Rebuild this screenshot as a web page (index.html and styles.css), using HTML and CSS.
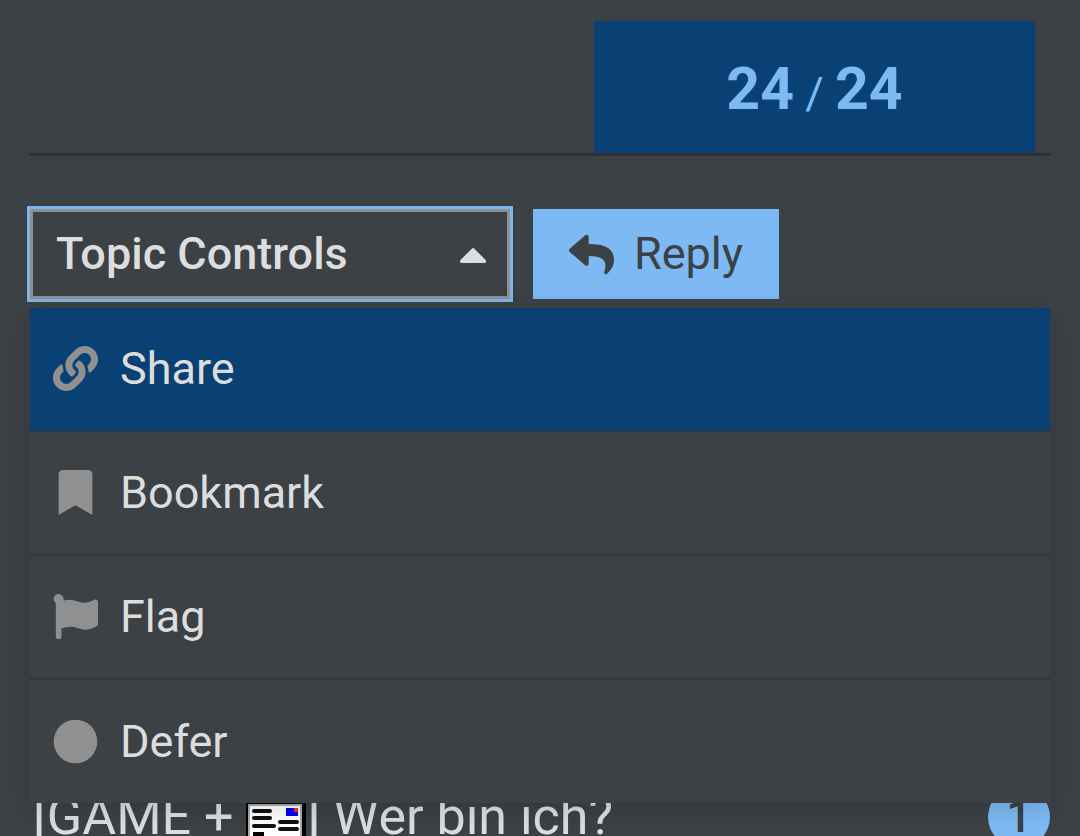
FILE: index.html
```html
<!DOCTYPE html>
<html lang="en">
<head>
    <meta charset="UTF-8">
    <meta name="viewport" content="width=device-width, initial-scale=1.0">
    <title>Topic Controls</title>
    <link rel="stylesheet" href="styles.css">
</head>
<body>
    <main class="topic">
        <div class="progress-row">
            <div class="progress"><strong>24</strong> <span>/</span> <strong>24</strong></div>
        </div>

        <div class="footer-buttons">
            <button type="button" class="btn btn-controls" aria-haspopup="true" aria-expanded="true">
                Topic Controls
                <svg class="caret" viewBox="0 0 320 512" aria-hidden="true"><path d="M288.662 352H31.338c-17.818 0-26.741-21.543-14.142-34.142l128.662-128.662c7.81-7.81 20.474-7.81 28.284 0l128.662 128.662c12.6 12.599 3.676 34.142-14.142 34.142z"/></svg>
            </button>
            <button type="button" class="btn btn-reply">
                <svg class="icon" viewBox="0 0 512 512" aria-hidden="true"><path d="M8.309 189.836L184.313 37.851C199.719 24.546 224 35.347 224 56.015v80.053c160.629 1.839 288 34.032 288 186.258 0 61.441-39.581 122.309-83.333 154.132-13.653 9.931-33.111-2.533-28.077-18.631 45.344-145.012-21.507-183.51-176.59-185.742V360c0 20.7-24.3 31.453-39.687 18.164l-176.004-152c-11.071-9.562-11.086-26.753 0-36.328z"/></svg>
                Reply
            </button>

            <ul class="menu">
                <li class="menu-item selected">
                    <button type="button">
                        <svg class="icon" viewBox="0 0 512 512" aria-hidden="true"><path d="M326.612 185.391c59.747 59.809 58.927 155.698.36 214.59-.11.12-.24.25-.36.37l-67.2 67.2c-59.27 59.27-155.699 59.262-214.96 0-59.27-59.26-59.27-155.7 0-214.96l37.106-37.106c9.84-9.84 26.786-3.3 27.294 10.606.648 17.722 3.826 35.527 9.69 52.721 1.986 5.822.567 12.262-3.783 16.612l-13.087 13.087c-28.026 28.026-28.905 73.66-1.155 101.96 28.024 28.579 74.086 28.749 102.325.51l67.2-67.19c28.191-28.191 28.073-73.757 0-101.83-3.701-3.694-7.429-6.564-10.341-8.569a16.037 16.037 0 0 1-6.947-12.606c-.396-10.567 3.348-21.456 11.698-29.806l21.054-21.055c5.521-5.521 14.182-6.199 20.584-1.731a152.482 152.482 0 0 1 20.522 17.197zM467.547 44.449c-59.261-59.262-155.69-59.27-214.96 0l-67.2 67.2c-.12.12-.25.25-.36.37-58.566 58.892-59.387 154.781.36 214.59a152.454 152.454 0 0 0 20.521 17.196c6.402 4.468 15.064 3.789 20.584-1.731l21.054-21.055c8.35-8.35 12.094-19.239 11.698-29.806a16.037 16.037 0 0 0-6.947-12.606c-2.912-2.005-6.64-4.875-10.341-8.569-28.073-28.073-28.191-73.639 0-101.83l67.2-67.19c28.239-28.239 74.3-28.069 102.325.51 27.75 28.3 26.872 73.934-1.155 101.96l-13.087 13.087c-4.35 4.35-5.769 10.79-3.783 16.612 5.864 17.194 9.042 34.999 9.69 52.721.509 13.906 17.454 20.446 27.294 10.606l37.106-37.106c59.271-59.259 59.271-155.699.001-214.959z"/></svg>
                        Share
                    </button>
                </li>
                <li class="menu-item">
                    <button type="button">
                        <svg class="icon" viewBox="-64 0 512 512" aria-hidden="true"><path d="M0 512V48C0 21.49 21.49 0 48 0h288c26.51 0 48 21.49 48 48v464L192 400 0 512z"/></svg>
                        Bookmark
                    </button>
                </li>
                <li class="menu-item">
                    <button type="button">
                        <svg class="icon" viewBox="0 0 512 512" aria-hidden="true"><path d="M349.565 98.783C295.978 98.783 251.721 64 184.348 64c-24.955 0-47.309 4.384-68.045 12.013a55.947 55.947 0 0 0 3.586-23.562C118.117 24.015 94.806 1.206 66.338.048 34.345-1.254 8 24.296 8 56c0 19.026 9.497 35.825 24 45.945V488c0 13.255 10.745 24 24 24h16c13.255 0 24-10.745 24-24v-94.4c28.311-12.064 63.582-22.122 114.435-22.122 53.588 0 97.844 34.783 165.217 34.783 48.169 0 86.667-16.294 122.505-40.858C506.84 359.452 512 349.571 512 339.045v-243.1c0-23.393-24.269-38.87-45.485-29.016-34.338 15.948-76.454 31.854-116.95 31.854z"/></svg>
                        Flag
                    </button>
                </li>
                <li class="menu-item">
                    <button type="button">
                        <svg class="icon" viewBox="0 0 512 512" aria-hidden="true"><circle cx="256" cy="256" r="248"/></svg>
                        Defer
                    </button>
                </li>
            </ul>
        </div>

        <div class="suggested">
            <a class="title" href="#">[GAME + <svg class="emoji" viewBox="0 0 60 60" aria-hidden="true">
                <rect width="60" height="60" fill="#000"/>
                <rect x="2" y="16" width="54" height="40" fill="#aaa"/>
                <rect x="4" y="18" width="50" height="38" fill="#fff"/>
                <path d="M8 23h16M8 30h16M8 38h20M34 34h17M34 41h17" stroke="#111" stroke-width="4" stroke-linecap="round"/>
                <rect x="40" y="20" width="12" height="8" fill="#00f"/>
                <rect x="48" y="20" width="4" height="4" fill="#e33"/>
                <path d="M7 44h11v12H7z" fill="#000"/>
            </svg>] Wer bin ich?</a>
            <a class="badge" href="#">1</a>
        </div>
    </main>
</body>
</html>
```
FILE: styles.css
```css
* {
    box-sizing: border-box;
}

body {
    margin: 0;
    height: 100vh;
    overflow: hidden;
    background: #3c4146;
    color: #dddddd;
    font-family: Roboto, sans-serif;
    font-size: 45px;
    line-height: 54px;
}

button {
    font: inherit;
    color: inherit;
    border: none;
    background: none;
    cursor: pointer;
}

a {
    color: inherit;
    text-decoration: none;
}

.topic {
    padding: 21px 30px 0;
}

/* Post counter */
.progress-row {
    display: flex;
    justify-content: flex-end;
    padding-right: 15px;
    border-bottom: 3px solid #2e3032;
}

.progress {
    width: 441px;
    height: 132px;
    line-height: 136px;
    text-align: center;
    background: #0a4175;
    color: #7db9f3;
}

.progress strong {
    font-size: 59px;
    font-weight: 700;
}

/* Buttons */
.footer-buttons {
    position: relative;
    display: flex;
    gap: 23px;
    margin-top: 53px;
}

.btn {
    display: flex;
    align-items: center;
    height: 90px;
}

.btn-controls {
    width: 480px;
    justify-content: space-between;
    padding: 0 20px 0 23px;
    border: 3px solid #909090;
    outline: 3px solid #7db4ec;
    font-weight: 500;
}

.btn-reply {
    gap: 20px;
    padding: 0 36px;
    background: #7db9f3;
    color: #3c4146;
}

.icon {
    width: 45px;
    height: 45px;
    flex: none;
    fill: currentColor;
}

.caret {
    height: 45px;
    fill: currentColor;
}

/* Dropdown menu */
.menu {
    position: absolute;
    top: 99px;
    left: 0;
    right: 0;
    margin: 0;
    padding: 0;
    list-style: none;
    background: #3c4146;
    box-shadow: 0 6px 24px rgba(0, 0, 0, 0.15);
}

.menu-item {
    border-bottom: 3px solid #36393b;
}

.menu-item:last-child {
    border-bottom: none;
}

.menu-item button {
    display: flex;
    align-items: center;
    gap: 22px;
    width: 100%;
    height: 121px;
    padding: 0 23px;
}

.menu-item:last-child button {
    height: 123px;
}

.menu-item .icon {
    fill: #909090;
}

.selected {
    background: #0a4175;
    border-bottom-color: #1d3a57;
}

/* Suggested topic */
.suggested {
    display: flex;
    justify-content: space-between;
    align-items: center;
    margin-top: 486px;
    padding-left: 3px;
}

.title {
    font-size: 52px;
    line-height: 64px;
    white-space: nowrap;
}

.emoji {
    width: 60px;
    height: 60px;
    vertical-align: -14px;
}

.badge {
    width: 62px;
    height: 62px;
    line-height: 62px;
    border-radius: 50%;
    text-align: center;
    font-weight: 500;
    background: #7db9f3;
    color: #3c4146;
}
```
